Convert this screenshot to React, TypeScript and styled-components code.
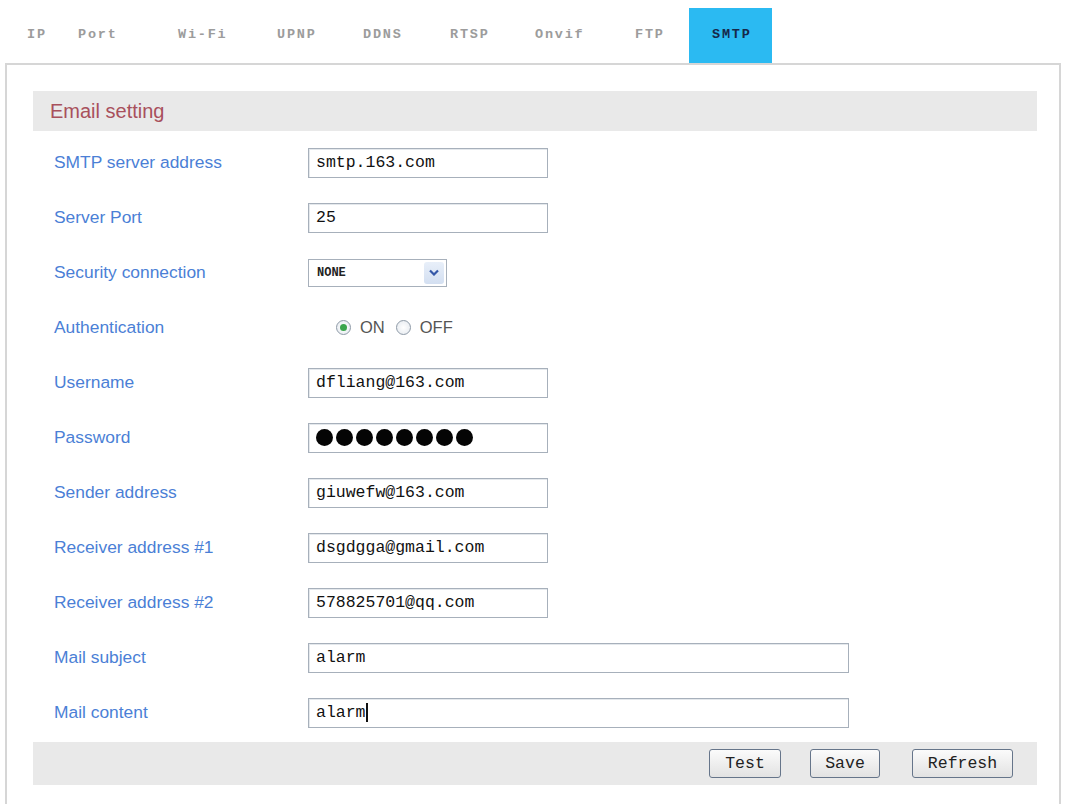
import React from "react";
import styled, { createGlobalStyle } from "styled-components";

const GlobalStyle = createGlobalStyle`
  body {
    margin: 0;
    background: #fff;
    font-family: "Liberation Sans", Arial, sans-serif;
  }
`;

const Page = styled.div`
  width: 1065px;
  height: 804px;
  overflow: hidden;
`;

const TabBar = styled.div`
  display: flex;
  height: 55px;
  padding: 8px 0 0 4px;
`;

const Tab = styled.div<{ active?: boolean; w: number }>`
  box-sizing: border-box;
  width: ${(p) => p.w}px;
  padding-left: 23px;
  height: 55px;
  line-height: 53px;
  font-family: "Liberation Mono", "Courier New", monospace;
  font-size: 13.5px;
  font-weight: bold;
  letter-spacing: 1.8px;
  color: ${(p) => (p.active ? "#16284a" : "#9c9c9c")};
  background: ${(p) => (p.active ? "#2bbaf2" : "transparent")};
`;

const Panel = styled.div`
  box-sizing: border-box;
  margin-left: 5px;
  width: 1056px;
  border: 2px solid #d6d6d6;
  padding: 26px 22px 40px 26px;
`;

const SectionHead = styled.div`
  height: 40px;
  line-height: 40px;
  padding-left: 17px;
  background: #e9e9e9;
  color: #a8505c;
  font-size: 20px;
`;

const Rows = styled.div`
  margin-top: 4px;
`;

const Row = styled.div`
  display: grid;
  grid-template-columns: 275px 1fr;
  align-items: center;
  height: 55px;
`;

const Label = styled.div`
  padding-left: 21px;
  color: #4b7fd6;
  font-size: 17.4px;
`;

const Field = styled.div<{ wide?: boolean }>`
  box-sizing: border-box;
  width: ${(p) => (p.wide ? "541px" : "240px")};
  height: 30px;
  padding-left: 7px;
  display: flex;
  align-items: center;
  border: 1px solid #a7b0bb;
  box-shadow: inset 1px 1px 0 #e4e8ec;
  font-family: "Liberation Mono", "Courier New", monospace;
  font-size: 16.5px;
  color: #111;
`;

const Caret = styled.span`
  display: inline-block;
  width: 2px;
  height: 19px;
  background: #111;
`;

const Dot = styled.span`
  width: 17px;
  height: 17px;
  border-radius: 50%;
  background: #050505;
  margin-right: 3px;
`;

const Select = styled.div`
  box-sizing: border-box;
  width: 139px;
  height: 28px;
  display: flex;
  align-items: center;
  justify-content: space-between;
  padding: 0 2px 0 8px;
  border: 1px solid #a7b0bb;
  font-family: "Liberation Mono", "Courier New", monospace;
  font-size: 12px;
  font-weight: bold;
  color: #222;
`;

const SelectArrow = styled.div`
  width: 20px;
  height: 22px;
  display: flex;
  align-items: center;
  justify-content: center;
  background: linear-gradient(#e8eff9, #d3dff1);
  border-radius: 3px;
`;

const RadioGroup = styled.div`
  display: flex;
  align-items: center;
  padding-left: 28px;
  font-size: 16.5px;
  color: #555;
`;

const Radio = styled.span<{ checked?: boolean }>`
  box-sizing: border-box;
  width: 15px;
  height: 15px;
  border-radius: 50%;
  border: 1px solid #8e9aa7;
  background: radial-gradient(#fff, #e3e8ee);
  display: flex;
  align-items: center;
  justify-content: center;
  margin-right: 9px;
  &::after {
    content: "";
    width: 7px;
    height: 7px;
    border-radius: 50%;
    background: ${(p) => (p.checked ? "#3aa54c" : "transparent")};
  }
`;

const RadioText = styled.span`
  margin-right: 11px;
`;

const Footer = styled.div`
  margin-top: 2px;
  height: 43px;
  background: #e9e9e9;
  display: flex;
  align-items: center;
  justify-content: flex-end;
  padding-right: 24px;
`;

const Button = styled.button<{ w: number; gap: number }>`
  width: ${(p) => p.w}px;
  margin-left: ${(p) => p.gap}px;
  height: 29px;
  border: 1px solid #66758a;
  border-radius: 3px;
  background: linear-gradient(#fbfbfb, #e2e2e2);
  font-family: "Liberation Mono", "Courier New", monospace;
  font-size: 16.5px;
  color: #222;
  padding: 0;
`;

// tab label and the width its cell takes in the bar
const tabs: [string, number][] = [
  ["IP", 51],
  ["Port", 100],
  ["Wi-Fi", 99],
  ["UPNP", 86],
  ["DDNS", 87],
  ["RTSP", 85],
  ["Onvif", 100],
  ["FTP", 77],
  ["SMTP", 83],
];

const addressFields: [string, string][] = [
  ["Sender address", "giuwefw@163.com"],
  ["Receiver address #1", "dsgdgga@gmail.com"],
  ["Receiver address #2", "578825701@qq.com"],
];

export default function App() {
  return (
    <Page>
      <GlobalStyle />
      <TabBar>
        {tabs.map(([t, w]) => (
          <Tab key={t} w={w} active={t === "SMTP"}>
            {t}
          </Tab>
        ))}
      </TabBar>
      <Panel>
        <SectionHead>Email setting</SectionHead>
        <Rows>
          <Row>
            <Label>SMTP server address</Label>
            <Field>smtp.163.com</Field>
          </Row>
          <Row>
            <Label>Server Port</Label>
            <Field>25</Field>
          </Row>
          <Row>
            <Label>Security connection</Label>
            <Select>
              NONE
              <SelectArrow>
                <svg width="10" height="7" viewBox="0 0 10 7">
                  <path d="M1 1.5 L5 5.5 L9 1.5" fill="none" stroke="#3558a8" strokeWidth="2.2" />
                </svg>
              </SelectArrow>
            </Select>
          </Row>
          <Row>
            <Label>Authentication</Label>
            <RadioGroup>
              <Radio checked />
              <RadioText>ON</RadioText>
              <Radio />
              <RadioText>OFF</RadioText>
            </RadioGroup>
          </Row>
          <Row>
            <Label>Username</Label>
            <Field>dfliang@163.com</Field>
          </Row>
          <Row>
            <Label>Password</Label>
            <Field>
              {Array.from({ length: 8 }).map((_, i) => (
                <Dot key={i} />
              ))}
            </Field>
          </Row>
          {addressFields.map(([label, value]) => (
            <Row key={label}>
              <Label>{label}</Label>
              <Field>{value}</Field>
            </Row>
          ))}
          <Row>
            <Label>Mail subject</Label>
            <Field wide>alarm</Field>
          </Row>
          <Row>
            <Label>Mail content</Label>
            <Field wide>
              alarm
              <Caret />
            </Field>
          </Row>
        </Rows>
        <Footer>
          <Button w={72} gap={0}>Test</Button>
          <Button w={70} gap={29}>Save</Button>
          <Button w={101} gap={32}>Refresh</Button>
        </Footer>
      </Panel>
    </Page>
  );
}
